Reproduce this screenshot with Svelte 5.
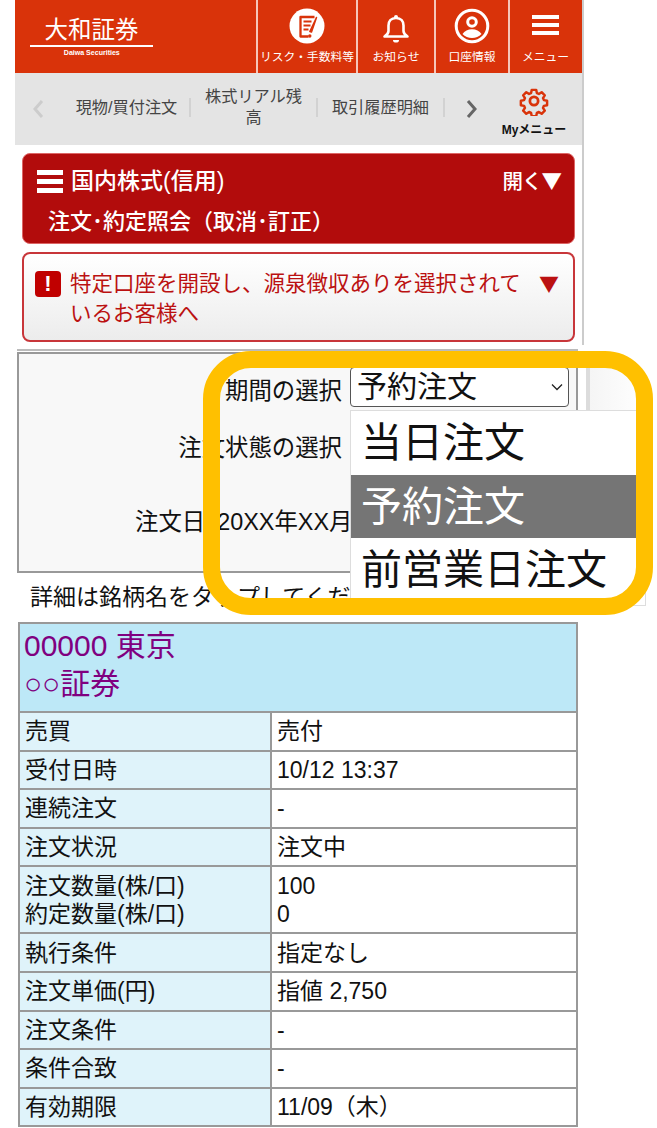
<script lang="ts">
    const navItems = ["現物/買付注文", "株式リアル残高", "取引履歴明細"];

    const rows = [
        { label: "売買", value: "売付" },
        { label: "受付日時", value: "10/12 13:37" },
        { label: "連続注文", value: "-" },
        { label: "注文状況", value: "注文中" },
        { label: "注文数量(株/口)\n約定数量(株/口)", value: "100\n0", tall: true },
        { label: "執行条件", value: "指定なし" },
        { label: "注文単価(円)", value: "指値 2,750" },
        { label: "注文条件", value: "-" },
        { label: "条件合致", value: "-" },
        { label: "有効期限", value: "11/09（木）" },
    ];

    const options = ["当日注文", "予約注文", "前営業日注文"];
    let period = $state("予約注文");
</script>

<div class="page">
    <div class="top">
        <header class="header">
            <div class="logo">
                <span class="logo-name">大和証券</span>
                <span class="logo-sub">Daiwa Securities</span>
            </div>
            <a class="head-btn risk" href="#risk">
                <svg width="36" height="36" viewBox="0 0 36 36">
                    <circle cx="18" cy="18" r="17.5" fill="#fff" />
                    <path d="M25.5 9H11.500v19.500h8" fill="none" stroke="#d9330a" stroke-width="2.300" stroke-linejoin="round" />
                    <path d="M14.500 13.500h8M14.500 17.500h7M14.500 21.500h5" stroke="#d9330a" stroke-width="2" />
                    <path d="M27.500 9.500l-5 14.500-1.700-.5z" fill="#d9330a" stroke="#d9330a" stroke-width="1.500" stroke-linejoin="round" />
                    <circle cx="20.800" cy="28" r="1.700" fill="#d9330a" />
                </svg>
                <span>リスク・手数料等</span>
            </a>
            <a class="head-btn bell" href="#news">
                <svg width="28" height="32" viewBox="0 0 28 32">
                    <path d="M14 6c-5 0-7.500 3.300-7.500 7.500v5.500c0 2-1.500 3.800-4 5.500h23c-2.500-1.700-4-3.500-4-5.500v-5.500C21.500 9.300 19 6 14 6z" fill="none" stroke="#fff" stroke-width="2.600" stroke-linejoin="round" />
                    <circle cx="14" cy="5" r="2" fill="#fff" />
                    <path d="M11 28h6a3 2.600 0 0 1-6 0z" fill="#fff" />
                </svg>
                <span>お知らせ</span>
            </a>
            <a class="head-btn account" href="#account">
                <svg width="36" height="36" viewBox="0 0 36 36">
                    <circle cx="18" cy="18" r="15.800" fill="none" stroke="#fff" stroke-width="3" />
                    <circle cx="18" cy="14" r="4.300" fill="none" stroke="#fff" stroke-width="3" />
                    <path d="M8.500 26c2-3.300 5.500-4.800 9.500-4.800s7.500 1.500 9.500 4.800c-2.500 2.600-5.800 4-9.500 4s-7-1.400-9.500-4z" fill="#fff" />
                </svg>
                <span>口座情報</span>
            </a>
            <a class="head-btn menu" href="#menu">
                <div class="bars"><i></i><i></i><i></i></div>
                <span>メニュー</span>
            </a>
        </header>

        <nav class="subnav">
            <svg class="chev" width="12" height="20" viewBox="0 0 12 20">
                <path d="M10 2L3 10l7 8" fill="none" stroke="#ccc" stroke-width="3" />
            </svg>
            <div class="nav-items">
                {#each navItems as item}
                    <a href="#nav">{item}</a>
                    <i class="sep"></i>
                {/each}
            </div>
            <svg class="chev" width="12" height="20" viewBox="0 0 12 20">
                <path d="M2 2l7 8-7 8" fill="none" stroke="#666" stroke-width="3" />
            </svg>
            <div class="mymenu">
                <svg width="30" height="30" viewBox="0 0 24 24" fill="none" stroke="#d9330a" stroke-width="2.200" stroke-linejoin="round">
                    <circle cx="12" cy="12" r="3.300" />
                    <path d="M10 2h4l.6 2.900 1.800.8 2.500-1.600 2.800 2.800-1.600 2.500.8 1.800 2.900.6v4l-2.900.6-.8 1.800 1.600 2.500-2.800 2.800-2.500-1.600-1.800.8-.6 2.900h-4l-.6-2.900-1.800-.8-2.500 1.600-2.800-2.800 1.600-2.500-.8-1.800-2.900-.6v-4l2.900-.6.800-1.800-1.600-2.500 2.800-2.800 2.500 1.600 1.800-.8z" transform="translate(1.300 1.300) scale(.89)" />
                </svg>
                <span>Myメニュー</span>
            </div>
        </nav>

        <section class="title">
            <div class="title-row">
                <div class="bars"><i></i><i></i><i></i></div>
                <span class="title-main">国内株式(信用)</span>
                <span class="title-open">開く<span class="tri">▼</span></span>
            </div>
            <div class="title-sub">注文･約定照会（取消･訂正）</div>
        </section>

        <section class="notice">
            <span class="mark">!</span>
            <p>特定口座を開設し、源泉徴収ありを選択されているお客様へ</p>
            <span class="arrow">▼</span>
        </section>
    </div>

    <div class="rule"></div>

    <div class="filter">
        <div class="filter-row first">
            <label for="period">期間の選択</label>
            <div class="select-wrap">
                <select id="period" bind:value={period}>
                    {#each options as opt}
                        <option>{opt}</option>
                    {/each}
                </select>
                <svg width="12" height="8" viewBox="0 0 12 8">
                    <path d="M1 1.500l5 5 5-5" fill="none" stroke="#222" stroke-width="1.300" />
                </svg>
            </div>
        </div>
        <div class="filter-row second">
            <span class="filter-label">注文状態の選択</span>
        </div>
        <div class="filter-date">
            <span>注文日</span>
            <span>20XX年XX月</span>
        </div>
    </div>

    <p class="hint">詳細は銘柄名をタップしてください。</p>

    <table class="orders">
        <colgroup>
            <col class="col-label" />
            <col />
        </colgroup>
        <thead>
            <tr><th colspan="2"><a href="#stock">00000 東京<br />○○証券</a></th></tr>
        </thead>
        <tbody>
            {#each rows as row}
                <tr class:tall={row.tall}>
                    <td class="label">{row.label}</td>
                    <td class="value">{row.value}</td>
                </tr>
            {/each}
        </tbody>
    </table>

    <!-- 開いたプルダウンと注目枠は本文の上に重ねる -->
    <div class="backdrop"></div>
    <ul class="dropdown">
        {#each options as opt}
            <li class:selected={opt === period}>{opt}</li>
        {/each}
    </ul>
    <div class="frame"></div>
</div>

<style>
    :global(body) {
        background: #fff;
        font-family: "Liberation Sans", "Noto Sans CJK JP", sans-serif;
        color: #111;
    }
    .page {
        position: relative;
        width: 657px;
        height: 1128px;
        overflow: hidden;
    }
    .top {
        width: 567px;
        height: 345px;
        margin-left: 15px;
        border-right: 2px solid #ccc;
    }

    .header {
        display: flex;
        height: 73px;
        background: #d9330a;
    }
    .logo {
        flex: none;
        display: flex;
        flex-direction: column;
        align-items: center;
        box-sizing: border-box;
        width: 123px;
        margin: 0 103px 0 15px;
        padding-top: 16px;
        color: #fff;
    }
    .logo-name {
        width: 123px;
        border-bottom: 2px solid #fff;
        font-size: 23.500px;
        line-height: 29px;
        text-align: center;
    }
    .logo-sub {
        font-size: 8px;
        font-weight: bold;
        line-height: 11px;
        white-space: nowrap;
        transform: scaleX(.88);
    }
    .head-btn {
        display: flex;
        flex-direction: column;
        align-items: center;
        justify-content: flex-end;
        box-sizing: border-box;
        height: 73px;
        padding-bottom: 8px;
        color: #fff;
        text-decoration: none;
        border-left: 2px solid #f6c6b8;
        font-size: 11.800px;
        line-height: 16px;
        white-space: nowrap;
    }
    .head-btn svg { margin-bottom: 5px; }
    .risk { width: 100px; }
    .bell { width: 78px; }
    .account { width: 74px; }
    .menu { width: 73px; }
    .menu .bars { margin-bottom: 14px; }
    .bars {
        display: flex;
        flex-direction: column;
        gap: 4px;
        width: 27px;
    }
    .bars i {
        display: block;
        height: 4px;
        background: #fff;
    }

    .subnav {
        display: flex;
        align-items: center;
        height: 72px;
        background: #e4e4e4;
        padding-left: 17px;
    }
    .nav-items {
        display: flex;
        align-items: center;
        width: 381px;
        margin: 0 21px 4px 20px;
    }
    .nav-items a {
        flex: 1;
        padding: 0 10px;
        text-align: center;
        color: #444;
        font-size: 16.200px;
        line-height: 21px;
        text-decoration: none;
    }
    .sep {
        flex: none;
        width: 2px;
        height: 19px;
        background: #d2d2d2;
    }
    .mymenu {
        display: flex;
        flex-direction: column;
        align-items: center;
        width: 70px;
        margin-left: 21px;
        padding-top: 4px;
        font-size: 12px;
        font-weight: bold;
    }
    .mymenu svg { margin-bottom: 4px; }

    .title {
        margin: 8px 7px 0;
        height: 91px;
        box-sizing: border-box;
        padding: 12px 13px 0 14px;
        background: #b20c0c;
        border: 1px solid #d66;
        border-radius: 8px;
        color: #fff;
    }
    .title-row {
        display: flex;
        align-items: center;
        font-size: 23px;
        line-height: 28px;
    }
    .title-row .bars {
        gap: 4px;
        width: 26px;
        margin-right: 8px;
    }
    .title-row .bars i { height: 5px; }
    .title-main { font-weight: 500; }
    .title-open {
        margin-left: auto;
        font-size: 20.500px;
        font-weight: 500;
        letter-spacing: -1px;
    }
    .tri, .arrow { font-family: "Noto Sans CJK JP", sans-serif; }
    .title-sub {
        margin: 12px 0 0 11px;
        font-size: 22px;
        font-weight: 500;
        line-height: 28px;
    }

    .notice {
        display: flex;
        margin: 8px 7px 0;
        height: 90px;
        box-sizing: border-box;
        padding: 15px 14px 0 11px;
        border: 2px solid #c8363a;
        border-radius: 8px;
        background: linear-gradient(#fff, #ececec);
        color: #bb1111;
    }
    .mark {
        flex: none;
        width: 26px;
        height: 26px;
        margin-top: 2px;
        border-radius: 4px;
        background: #c00000;
        color: #fff;
        font-size: 22px;
        font-weight: bold;
        line-height: 26px;
        text-align: center;
    }
    .notice p {
        width: 452px;
        margin: 0 0 0 9px;
        font-size: 21.500px;
        line-height: 30px;
    }
    .arrow {
        margin-left: auto;
        font-size: 20px;
        line-height: 30px;
    }

    .rule {
        width: 561px;
        height: 2px;
        margin: 4px 0 0 17px;
        background: #bbb;
    }
    .filter {
        width: 561px;
        height: 221px;
        box-sizing: border-box;
        margin: 1px 0 0 17px;
        border: 2px solid #999;
        background: #f8f8f8;
        font-size: 23.400px;
        line-height: 34px;
    }
    .filter-row {
        display: flex;
        align-items: flex-start;
    }
    .filter-row label, .filter-label {
        flex: none;
        width: 323px;
        text-align: right;
    }
    .first { margin-top: 13px; }
    .first label { margin-top: 7px; }
    .second { margin-top: 23px; }
    .select-wrap {
        position: relative;
        margin-left: 8px;
    }
    .select-wrap select {
        display: block;
        appearance: none;
        width: 219px;
        height: 40px;
        box-sizing: border-box;
        padding: 0 0 0 6px;
        border: 1.500px solid #555;
        border-radius: 4px;
        background: #fff;
        color: #111;
        font: inherit;
        font-size: 30px;
    }
    .select-wrap svg {
        position: absolute;
        right: 6px;
        top: 16px;
        pointer-events: none;
    }
    .filter-date {
        display: flex;
        gap: 12px;
        margin: 40px 0 0 116px;
        white-space: nowrap;
    }

    .hint {
        margin: 7px 0 0 30px;
        font-size: 23px;
        line-height: 34px;
        white-space: nowrap;
    }

    .orders {
        width: 560px;
        margin: 8px 0 0 18px;
        border-collapse: collapse;
        table-layout: fixed;
        font-size: 23px;
        line-height: 28px;
    }
    .col-label { width: 252px; }
    .orders th {
        height: 89px;
        box-sizing: border-box;
        padding: 3px 5px 0 4px;
        border: 2px solid #999;
        background: #bde8f7;
        text-align: left;
        vertical-align: top;
        font-size: 30px;
        font-weight: normal;
        line-height: 38px;
    }
    .orders th a {
        color: #800080;
        text-decoration: none;
    }
    .orders td {
        height: 38.600px;
        box-sizing: border-box;
        padding: 0 5px;
        border: 2px solid #999;
        white-space: pre-line;
    }
    .label {
        background: #dff3fa;
        padding-left: 4px;
    }
    .value { background: #fff; }
    .tall td { height: 67px; }

    .backdrop {
        position: absolute;
        left: 586px;
        top: 366px;
        width: 60px;
        height: 44px;
        background: linear-gradient(90deg, #dcdcdc 0 4px, #f5f5f5 4px, #fff);
    }
    .dropdown {
        position: absolute;
        left: 351px;
        top: 411px;
        width: 294px;
        height: 194px;
        margin: 0;
        padding: 0;
        list-style: none;
        background: #fff;
        box-shadow: 0 0 0 1px #ddd;
        font-size: 41px;
    }
    .dropdown li {
        height: 63.500px;
        padding-left: 10px;
        line-height: 65px;
        white-space: nowrap;
    }
    .dropdown .selected {
        background: #757575;
        color: #fff;
    }
    .frame {
        position: absolute;
        left: 203px;
        top: 351px;
        width: 450px;
        height: 264px;
        box-sizing: border-box;
        border: 17px solid #ffc000;
        border-radius: 48px;
    }
</style>
